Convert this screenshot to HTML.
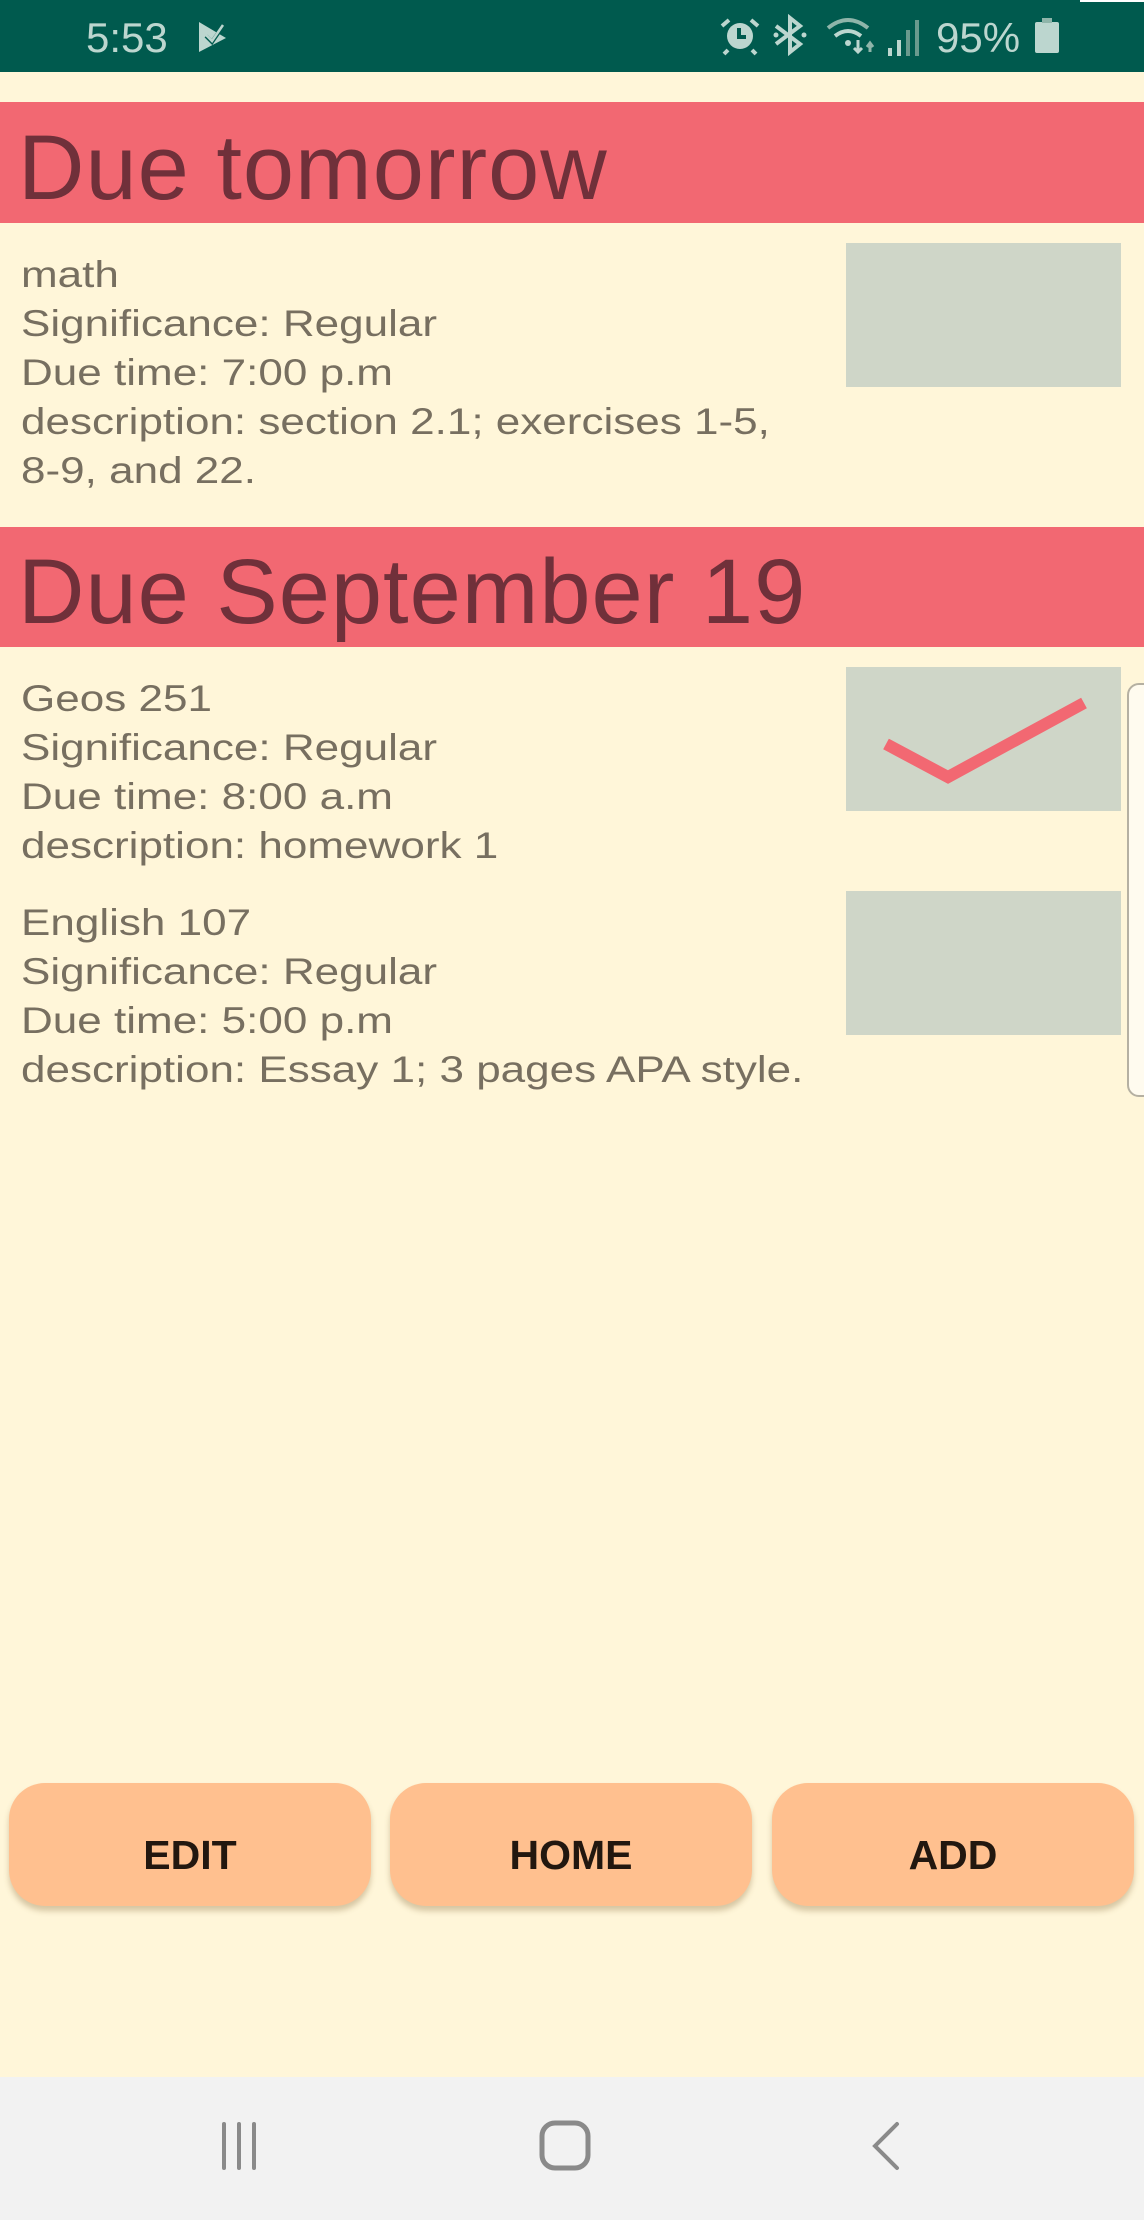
<!DOCTYPE html>
<html><head><meta charset="utf-8"><style>
*{margin:0;padding:0;box-sizing:border-box}
body{width:1144px;height:2220px;background:#fff6d9;font-family:"Liberation Sans",Arial,sans-serif;position:relative;overflow:hidden}
.abs{position:absolute}
#sb{left:0;top:0;width:1144px;height:72px;background:#005a4e}
.sbt{color:#bcd6cf;font-size:42px;top:14px}
.hdr{left:0;width:1144px;background:#f26872;color:#70303a;font-size:92px;padding-left:18px;letter-spacing:1px;white-space:nowrap}
.txt{left:21px;color:#776f60;font-size:37px;line-height:49px;white-space:nowrap;transform:scaleX(1.19);transform-origin:0 0}
.box{left:846px;width:275px;height:144px;background:#cfd6c8}
.btn{top:1783px;height:123px;background:#ffc08f;border-radius:36px;box-shadow:0 5px 6px rgba(120,90,40,0.3);color:#22170f;font-size:41px;font-weight:bold;text-align:center;line-height:144px}
#nav{left:0;top:2077px;width:1144px;height:143px;background:#f2f2f2}
</style></head><body>
<div id="sb" class="abs"></div>
<div class="abs" style="left:1080px;top:0;width:64px;height:2px;background:#fff"></div>
<div class="abs sbt" style="left:86px">5:53</div>
<svg class="abs" style="left:196px;top:18px" width="40" height="36" viewBox="0 0 40 36"><path d="M3 4 L30 20 L3 34 Z" fill="#bcd6cf"/><path d="M10 18 L16 24 L27 8" stroke="#005a4e" stroke-width="4" fill="none"/><path d="M10 18 L16 24 L27 8" stroke="#bcd6cf" stroke-width="2.5" fill="none" transform="translate(0,-1)"/></svg>
<svg class="abs" style="left:718px;top:16px" width="44" height="40" viewBox="0 0 44 40"><circle cx="22" cy="20" r="13" fill="#bcd6cf"/><path d="M21 12 V21 H28" stroke="#005a4e" stroke-width="4" fill="none"/><path d="M4 10 L11 4 M40 10 L33 4 M10 34 L6 38 M34 34 L38 38" stroke="#bcd6cf" stroke-width="4"/></svg>
<svg class="abs" style="left:772px;top:14px" width="36" height="42" viewBox="0 0 36 42"><path d="M4 12 L28 30 L18 38 V4 L28 12 L4 30" stroke="#bcd6cf" stroke-width="4" fill="none"/><circle cx="4" cy="21" r="2.5" fill="#bcd6cf"/><circle cx="32" cy="21" r="2.5" fill="#bcd6cf"/></svg>
<svg class="abs" style="left:826px;top:16px" width="50" height="40" viewBox="0 0 50 40"><path d="M2 12 Q22 -4 42 12" stroke="#8fb5aa" stroke-width="4" fill="none"/><path d="M9 20 Q22 10 35 20" stroke="#bcd6cf" stroke-width="4" fill="none"/><circle cx="22" cy="27" r="3" fill="#bcd6cf"/><path d="M32 24 V36 M28 32 L32 36 L36 32" stroke="#bcd6cf" stroke-width="3" fill="none"/><path d="M44 36 V28 M41 31 L44 27 L47 31" stroke="#8fb5aa" stroke-width="3" fill="none"/></svg>
<svg class="abs" style="left:886px;top:18px" width="36" height="38" viewBox="0 0 36 38"><rect x="2" y="30" width="4" height="8" fill="#bcd6cf"/><rect x="11" y="22" width="4" height="16" fill="#bcd6cf"/><rect x="20" y="12" width="4" height="26" fill="#6a9a8e"/><rect x="29" y="2" width="4" height="36" fill="#6a9a8e"/></svg>
<div class="abs sbt" style="left:936px">95%</div>
<div class="abs" style="left:1035px;top:22px;width:24px;height:31px;background:#bcd6cf;border-radius:2px"></div>
<div class="abs" style="left:1042px;top:18px;width:10px;height:5px;background:#8fb5aa"></div>

<div class="abs hdr" style="top:102px;height:121px;line-height:132px">Due tomorrow</div>
<div class="abs txt" style="top:250px">math<br>Significance: Regular<br>Due time: 7:00 p.m<br>description: section 2.1; exercises 1-5,<br>8-9, and 22.</div>
<div class="abs box" style="top:243px"></div>

<div class="abs hdr" style="top:527px;height:120px;line-height:130px">Due September 19</div>
<div class="abs txt" style="top:674px">Geos 251<br>Significance: Regular<br>Due time: 8:00 a.m<br>description: homework 1</div>
<div class="abs box" style="top:667px"></div>
<svg class="abs" style="left:846px;top:667px" width="275" height="144"><path d="M40 77 L102 110 L238 36" stroke="#f26872" stroke-width="12" fill="none"/></svg>
<div class="abs txt" style="top:898px">English 107<br>Significance: Regular<br>Due time: 5:00 p.m<br>description: Essay 1; 3 pages APA style.</div>
<div class="abs box" style="top:891px"></div>
<div class="abs" style="left:1127px;top:683px;width:30px;height:414px;border:2px solid #b5b0a2;border-radius:12px;background:#fffbef"></div>

<div class="abs btn" style="left:9px;width:362px">EDIT</div>
<div class="abs btn" style="left:390px;width:362px">HOME</div>
<div class="abs btn" style="left:772px;width:362px">ADD</div>

<div id="nav" class="abs"></div>
<svg class="abs" style="left:215px;top:2115px" width="700" height="60"><path d="M9 9 V53 M24 9 V53 M39 9 V53" stroke="#8a8a8a" stroke-width="4" stroke-linecap="round"/><rect x="327" y="8" width="46" height="45" rx="13" stroke="#8a8a8a" stroke-width="5" fill="none"/><path d="M682 9 L660 31 L682 53" stroke="#8a8a8a" stroke-width="4" fill="none" stroke-linecap="round"/></svg>
</body></html>
